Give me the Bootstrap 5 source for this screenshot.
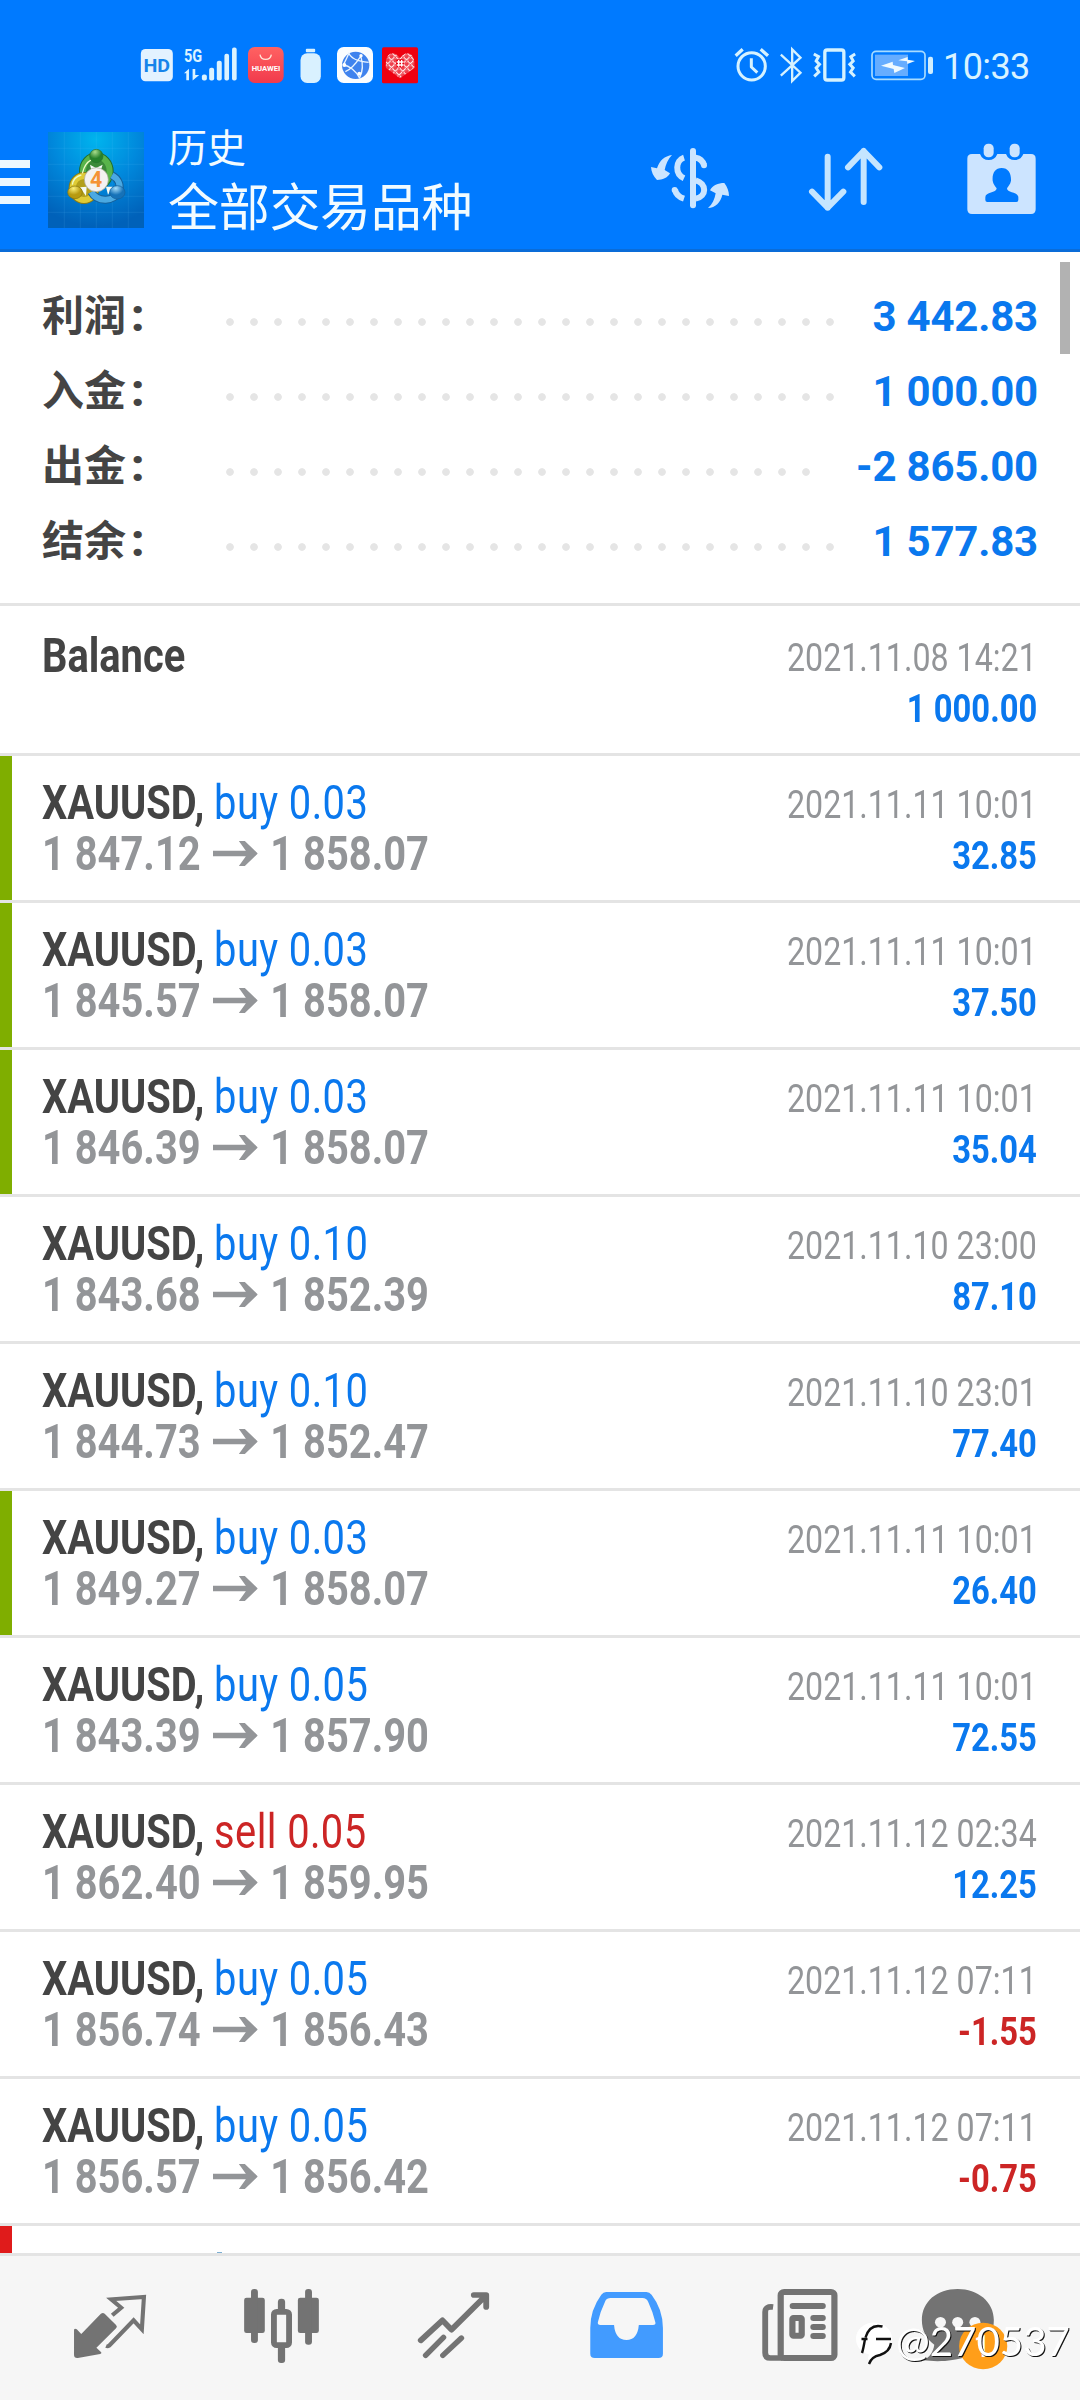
<!DOCTYPE html>
<html lang="zh-CN">
<head>
<meta charset="utf-8">
<meta name="viewport" content="width=device-width, initial-scale=1">
<title>历史 - 全部交易品种</title>
<link href="https://cdn.jsdelivr.net/npm/bootstrap@5.3.0/dist/css/bootstrap.min.css" rel="stylesheet">
<style>
  body { font-family: Roboto, "Noto Sans CJK SC", sans-serif; width: 1080px; height: 2400px; overflow: hidden; color: #444; }
  svg { display: block; flex: none; overflow: visible; }
  .app-head { background: #007aff; height: 252px; border-bottom: 3px solid #0a6cd8; }
  .status-strip { height: 108px; padding: 47px 0 0 140px; }
  .status-clock { font-size: 36px; line-height: 40px; letter-spacing: -.6px; color: #d8f3ff; margin-left: 10px; }
  .tool-strip { height: 141px; }
  .app-titles { color: #f2fbff; margin-left: 24px; line-height: 60px; width: 483px; padding-top: 1px; }
  .title-top { font-size: 39px; }
  .title-main { font-size: 51px; letter-spacing: -.3px; }
  .totals { height: 354px; padding: 26px 42px 0; border-bottom: 3px solid #e4e4e4; }
  .total-line { height: 75px; font-size: 42px; font-weight: 700; line-height: 75px; }
  .total-label { width: 182px; }
  .total-label span { margin-left: 5px; font-size: 45px; font-weight: 900; }
  .total-sum { letter-spacing: -.2px; padding-top: 1px; }
  .leader { height: 8px; margin-top: 13px; background: radial-gradient(circle at 6px 4px, #e5e5e5 3.4px, transparent 4.2px) 0 0 / 24px 8px repeat-x; }
  .l26 { width: 612px; } .l25 { width: 588px; }
  .up { color: #0a78ee; } .down { color: #cc2525; }
  .history { height: 1647px; overflow: hidden; }
  .history > .deal { flex: none; height: 147px; color: #444; border: 0; border-bottom: 3px solid #e4e4e4; padding: 21px 43px 0 42px; background: #fff; line-height: 51px; }
  .history > .first { height: 150px; padding-top: 24px; }
  .history > .tagged { box-shadow: inset 12px 0 #7fae00; }
  .history > .alert-tag { box-shadow: inset 12px 0 #e01b1b; }
  .sliver { width: 5px; height: 1px; margin: 5px 0 0 175px; background: #7eb0d4; }
  .deal-left { font-size: 48px; white-space: nowrap; }
  .symbol, .prices { transform-origin: left; width: max-content; transform: scaleX(.83); }
  .symbol span { letter-spacing: .5px; }
  .prices { color: #939598; font-weight: 700; }
  .prices svg { margin: 0 15px; }
  .deal-right { font-size: 39px; padding-top: 3px; white-space: nowrap; }
  .stamp, .profit { transform-origin: right; width: max-content; margin-left: auto; }
  .stamp { transform: scaleX(.825); color: #939598; }
  .profit { transform: scaleX(.84); font-weight: 700; }
  .thumb { width: 10px; height: 92px; background: #b2b2b2; right: 10px; top: 10px; }
  .tabs { height: 147px; background: #f6f6f6; border-top: 3px solid #e4e4e4; padding: 0 24px; }
  .tabs svg { width: 172px; height: 144px; }
  .tabs .signature { width: 216px; }
  .signature text { filter: drop-shadow(1.5px 1.5px 0 #111); }
</style>
</head>
<body class="m-0 bg-white">
<header class="app-head">
  <div class="status-strip d-flex align-items-start">
    <svg width="33" height="35" viewBox="60 52 98 105"><rect x="62" y="58" width="96" height="97" rx="14" fill="#e3f2ff"/><text x="110" y="127" font-size="56" font-weight="700" text-anchor="middle" fill="#1784ea" textLength="80" lengthAdjust="spacingAndGlyphs">HD</text></svg>
    <svg style="margin-left:11px" width="53" height="35" viewBox="192 52 160 105" fill="#dcf3ff"><text x="192" y="98" font-size="58" font-weight="700" textLength="55" lengthAdjust="spacingAndGlyphs">5G</text><path d="M192 131l15-14v35h-8v-21zM218 118h8v18h12l-20 17z"/><rect x="246" y="135" width="15" height="18" rx="6"/><rect x="268" y="114" width="15" height="39" rx="6"/><rect x="291" y="93" width="15" height="60" rx="6"/><rect x="314" y="72" width="14" height="81" rx="6"/><rect x="337" y="53" width="14" height="100" rx="6"/></svg>
    <svg style="margin-left:11px" width="36" height="36" viewBox="383 50 108 108"><defs><linearGradient id="hw" x2="0" y2="1"><stop stop-color="#ff6262"/><stop offset="1" stop-color="#f13a4c"/></linearGradient></defs><rect x="383" y="50" width="107" height="108" rx="20" fill="url(#hw)"/><path d="M419 73c3 19 31 19 34 0" fill="none" stroke="#ffe5d8" stroke-width="4"/><text x="437" y="121" font-size="19" font-weight="700" text-anchor="middle" textLength="86" lengthAdjust="spacingAndGlyphs" fill="#fff">HUAWEI</text></svg>
    <svg style="margin-left:16px" width="21" height="36" viewBox="540 50 62 108" fill="#d9f1ff"><rect x="557" y="55" width="28" height="11" rx="3"/><rect x="541" y="69" width="61" height="89" rx="20"/></svg>
    <svg style="margin-left:16px" width="36" height="36" viewBox="651 50 108 108"><rect x="651" y="50" width="108" height="108" rx="20" fill="#fafdff"/><circle cx="707" cy="105" r="41" fill="#3f83ee"/><g fill="none" stroke="#eaf5ff" stroke-width="4"><path d="M686 66c5 18 25 27 60 30M686 70c-5 12-10 22-16 34M670 104c17 2 38 16 49 40M722 76c6 20 8 45-3 66M676 124c16-6 30-22 46-46"/></g><g fill="#fff"><circle cx="673" cy="104" r="6"/><circle cx="723" cy="76" r="5"/><circle cx="718" cy="130" r="6"/></g></svg>
    <svg style="margin-left:9px" width="36" height="36" viewBox="786 50 108 108"><defs><pattern id="lace" width="16" height="16" patternUnits="userSpaceOnUse" patternTransform="rotate(45)"><rect width="16" height="16" fill="#ffe9e9"/><path d="M0 0h16M0 0v16M5 5h6v6H5z" stroke="#e80010" stroke-width="3" fill="none"/></pattern></defs><rect x="786" y="51" width="108" height="108" rx="5" fill="#ee0010"/><path d="M840 144l-42-31c-5-45 22-57 42-30c20-27 48-15 43 30z" fill="url(#lace)"/><rect x="828" y="87" width="24" height="24" rx="6" fill="#e80010"/><path d="M836 89v20M845 89v20M830 95h21M830 104h21" stroke="#fff" stroke-width="4"/></svg>
    <svg style="margin-left:317px" width="34" height="36" viewBox="44 52 102 108" fill="none" stroke="#d5f2ff"><circle cx="94" cy="110" r="41" stroke-width="9"/><path d="M93 86v26l18 17" stroke-width="9" stroke-linejoin="round"/><path d="M46 78l21-19M121 59l22 19" stroke-width="10"/></svg>
    <svg style="margin-left:11px" width="23" height="36" viewBox="178 52 68 108" fill="none" stroke="#d5f2ff" stroke-width="7"><path d="M180 75l59 54-25 25V59l25 25-59 54"/></svg>
    <svg style="margin-left:10px" width="43" height="36" viewBox="278 52 128 108" fill="none" stroke="#d5f2ff"><rect x="313" y="61" width="57" height="90" rx="7" stroke-width="10"/><path d="M280 73l14 8-7 13 10 10-10 11 8 12-14 13M404 73l-13 8 7 13-10 10 10 11-8 12 13 13" stroke-width="9"/></svg>
    <svg style="margin-left:15px" width="62" height="36" viewBox="450 52 186 108"><rect x="453" y="65" width="159" height="84" rx="12" fill="none" stroke="#a8dcff" stroke-width="5"/><rect x="462" y="75" width="99" height="64" fill="#66adff"/><rect x="621" y="81" width="15" height="52" rx="6" fill="#cfeeff"/><path d="M480 108l35-12 1 10 36 9-32 15-2-12zM532 92l28-10v8l22 4-23 9-1-8z" fill="#effaff"/></svg>
    <div class="status-clock">10:33</div>
  </div>
  <nav class="tool-strip d-flex align-items-center">
    <svg width="30" height="44" viewBox="0 0 30 44" style="margin-top:6px" fill="#edf8ff"><path d="M0 0h30v8H0zM0 18h30v8H0zM0 36h30v8H0z"/></svg>
    <svg style="margin:3px 0 0 18px" width="96" height="96" viewBox="144 66 288 288">
      <defs><radialGradient id="sky" cx=".5" cy=".08" r=".9"><stop stop-color="#00b4ee"/><stop offset=".5" stop-color="#0088dc"/><stop offset="1" stop-color="#0061b9"/></radialGradient>
      <radialGradient id="g1" cx=".4" cy=".2"><stop stop-color="#a8dc8c"/><stop offset="1" stop-color="#27812b"/></radialGradient>
      <radialGradient id="y1" cx=".4" cy=".2"><stop stop-color="#fbf07a"/><stop offset="1" stop-color="#b79a10"/></radialGradient>
      <radialGradient id="b1" cx=".4" cy=".2"><stop stop-color="#a5dcfa"/><stop offset="1" stop-color="#1672b8"/></radialGradient></defs>
      <rect x="144" y="66" width="288" height="288" fill="url(#sky)"/>
      <path d="M144 115h288M144 163h288M144 211h288M144 259h288M144 307h288M193 66v288M241 66v288M289 66v288M337 66v288M385 66v288" stroke="#6cd0ff" stroke-opacity=".18" stroke-width="2"/>
      <ellipse cx="289" cy="184" rx="40" ry="45" fill="#226e2b" stroke="#226e2b" stroke-width="24"/>
      <ellipse cx="289" cy="184" rx="40" ry="45" fill="#3b8a38" stroke="#59b44b" stroke-width="18"/>
      <ellipse cx="252" cy="234" rx="34" ry="36" fill="#8b7b12" stroke="#8b7b12" stroke-width="24"/>
      <ellipse cx="252" cy="234" rx="34" ry="36" fill="#b3a01c" stroke="#dfcb35" stroke-width="18"/>
      <path d="M274 246c18 32 70 30 82-2c8-20-2-38-20-48" fill="none" stroke="#165f98" stroke-width="24"/>
      <path d="M274 246c18 32 70 30 82-2c8-20-2-38-20-48" fill="none" stroke="#4aa9e2" stroke-width="18"/>
      <path d="M247 190c6-24 14-34 26-40M217 224c2-15 12-25 27-29" fill="none" stroke="#effbc8" stroke-width="4"/>
      <path d="M270 164l18 10 20-10-8 24h-24zM240 232l20-2-2 28zM318 230l20 0-14 24z" fill="#f5fbf5"/>
      <circle cx="289" cy="138" r="20" fill="url(#g1)" stroke="#27722d" stroke-width="2"/>
      <ellipse cx="225" cy="247" rx="22" ry="19" fill="url(#y1)" stroke="#84720f" stroke-width="2"/>
      <ellipse cx="352" cy="247" rx="23" ry="20" fill="url(#b1)" stroke="#165f98" stroke-width="2"/>
      <circle cx="289" cy="209" r="36" fill="#f4f2f1" stroke="#a5a395" stroke-width="2"/>
      <text x="288" y="232" text-anchor="middle" font-size="64" font-weight="700" fill="#f59335">4</text>
    </svg>
    <div class="app-titles"><div class="title-top">历史</div><div class="title-main">全部交易品种</div></div>
    <svg style="margin-bottom:1px" width="78" height="72" viewBox="93 66 234 216" fill="#cbe5ff"><path d="M93 141l18 4c8-24 23-37 45-40-12 12-19 29-22 45l16 10c-8 14-22 20-39 20-11-12-17-24-18-39zM327 228l-20-4c-5 23-21 39-43 40 13-11 20-26 23-44l-17-9c8-15 24-22 43-22 9 12 14 24 14 39z"/><path d="M192 113c-26 8-28 49 0 62M165 208c2 15 12 23 27 28M227 113c13 2 21 9 25 22M227 181c34 10 34 48 0 55" fill="none" stroke="#cbe5ff" stroke-width="18"/><circle cx="164" cy="210" r="9"/><circle cx="252" cy="136" r="9"/><rect x="210" y="84" width="18" height="181" rx="9"/></svg>
    <svg style="margin:0 0 1px 80px" width="74" height="72" viewBox="568 66 222 216" fill="none" stroke="#c5e5ff" stroke-width="18" stroke-linecap="round" stroke-linejoin="round"><path d="M624 110v153M577 215l47 48 47-48M732 246V93M685 142l47-49 47 49"/></svg>
    <svg style="margin:0 0 1px 84px" width="69" height="72" viewBox="1042 66 207 216"><path d="M1057 102h24q7 18 26 18t26-18h26q7 18 26 18t26-18h23q14 0 14 14v152q0 14-14 14h-177q-14 0-14-14V116q0-14 14-14z" fill="#cce4ff"/><rect x="1092" y="71" width="30" height="41" rx="14" fill="#cce4ff"/><rect x="1170" y="71" width="30" height="41" rx="14" fill="#cce4ff"/><path d="M1146 144c20 0 29 16 28 38-2 11-8 16-12 23 0 15 34 10 34 27v8q0 6-6 6h-87q-6 0-6-6v-8c0-17 34-12 34-27-5-7-10-12-12-23-2-22 7-38 27-38z" fill="#007aff"/></svg>
  </nav>
</header>

<main class="position-relative">
  <div class="thumb position-absolute"></div>
  <section class="totals">
    <div class="total-line d-flex align-items-center"><div class="total-label">利润<span>:</span></div><div class="leader l26"></div><div class="total-sum up ms-auto">3 442.83</div></div>
    <div class="total-line d-flex align-items-center"><div class="total-label">入金<span>:</span></div><div class="leader l26"></div><div class="total-sum up ms-auto">1 000.00</div></div>
    <div class="total-line d-flex align-items-center"><div class="total-label">出金<span>:</span></div><div class="leader l25"></div><div class="total-sum up ms-auto">-2 865.00</div></div>
    <div class="total-line d-flex align-items-center"><div class="total-label">结余<span>:</span></div><div class="leader l26"></div><div class="total-sum up ms-auto">1 577.83</div></div>
  </section>
  <svg width="0" height="0" class="position-absolute"><symbol id="arr" viewBox="0 0 45 25" preserveAspectRatio="none"><path d="M0 9.700h33L26 0h6l13 12.500L32 25h-6l7-9.700H0z"/></symbol></svg>
  <div class="history list-group list-group-flush">
    <div class="list-group-item deal first d-flex justify-content-between"><div class="deal-left"><div class="symbol"><b>Balance</b></div></div><div class="deal-right"><div class="stamp">2021.11.08 14:21</div><div class="profit up">1 000.00</div></div></div>
    <div class="list-group-item deal tagged d-flex justify-content-between"><div class="deal-left"><div class="symbol"><b>XAUUSD,</b> <span class="up">buy 0.03</span></div><div class="prices d-flex align-items-center">1 847.12<svg width="54" height="25" fill="currentColor"><use href="#arr"/></svg>1 858.07</div></div><div class="deal-right"><div class="stamp">2021.11.11 10:01</div><div class="profit up">32.85</div></div></div>
    <div class="list-group-item deal tagged d-flex justify-content-between"><div class="deal-left"><div class="symbol"><b>XAUUSD,</b> <span class="up">buy 0.03</span></div><div class="prices d-flex align-items-center">1 845.57<svg width="54" height="25" fill="currentColor"><use href="#arr"/></svg>1 858.07</div></div><div class="deal-right"><div class="stamp">2021.11.11 10:01</div><div class="profit up">37.50</div></div></div>
    <div class="list-group-item deal tagged d-flex justify-content-between"><div class="deal-left"><div class="symbol"><b>XAUUSD,</b> <span class="up">buy 0.03</span></div><div class="prices d-flex align-items-center">1 846.39<svg width="54" height="25" fill="currentColor"><use href="#arr"/></svg>1 858.07</div></div><div class="deal-right"><div class="stamp">2021.11.11 10:01</div><div class="profit up">35.04</div></div></div>
    <div class="list-group-item deal d-flex justify-content-between"><div class="deal-left"><div class="symbol"><b>XAUUSD,</b> <span class="up">buy 0.10</span></div><div class="prices d-flex align-items-center">1 843.68<svg width="54" height="25" fill="currentColor"><use href="#arr"/></svg>1 852.39</div></div><div class="deal-right"><div class="stamp">2021.11.10 23:00</div><div class="profit up">87.10</div></div></div>
    <div class="list-group-item deal d-flex justify-content-between"><div class="deal-left"><div class="symbol"><b>XAUUSD,</b> <span class="up">buy 0.10</span></div><div class="prices d-flex align-items-center">1 844.73<svg width="54" height="25" fill="currentColor"><use href="#arr"/></svg>1 852.47</div></div><div class="deal-right"><div class="stamp">2021.11.10 23:01</div><div class="profit up">77.40</div></div></div>
    <div class="list-group-item deal tagged d-flex justify-content-between"><div class="deal-left"><div class="symbol"><b>XAUUSD,</b> <span class="up">buy 0.03</span></div><div class="prices d-flex align-items-center">1 849.27<svg width="54" height="25" fill="currentColor"><use href="#arr"/></svg>1 858.07</div></div><div class="deal-right"><div class="stamp">2021.11.11 10:01</div><div class="profit up">26.40</div></div></div>
    <div class="list-group-item deal d-flex justify-content-between"><div class="deal-left"><div class="symbol"><b>XAUUSD,</b> <span class="up">buy 0.05</span></div><div class="prices d-flex align-items-center">1 843.39<svg width="54" height="25" fill="currentColor"><use href="#arr"/></svg>1 857.90</div></div><div class="deal-right"><div class="stamp">2021.11.11 10:01</div><div class="profit up">72.55</div></div></div>
    <div class="list-group-item deal d-flex justify-content-between"><div class="deal-left"><div class="symbol"><b>XAUUSD,</b> <span class="down">sell 0.05</span></div><div class="prices d-flex align-items-center">1 862.40<svg width="54" height="25" fill="currentColor"><use href="#arr"/></svg>1 859.95</div></div><div class="deal-right"><div class="stamp">2021.11.12 02:34</div><div class="profit up">12.25</div></div></div>
    <div class="list-group-item deal d-flex justify-content-between"><div class="deal-left"><div class="symbol"><b>XAUUSD,</b> <span class="up">buy 0.05</span></div><div class="prices d-flex align-items-center">1 856.74<svg width="54" height="25" fill="currentColor"><use href="#arr"/></svg>1 856.43</div></div><div class="deal-right"><div class="stamp">2021.11.12 07:11</div><div class="profit down">-1.55</div></div></div>
    <div class="list-group-item deal d-flex justify-content-between"><div class="deal-left"><div class="symbol"><b>XAUUSD,</b> <span class="up">buy 0.05</span></div><div class="prices d-flex align-items-center">1 856.57<svg width="54" height="25" fill="currentColor"><use href="#arr"/></svg>1 856.42</div></div><div class="deal-right"><div class="stamp">2021.11.12 07:11</div><div class="profit down">-0.75</div></div></div>
    <div class="list-group-item deal alert-tag"><div class="sliver"></div></div>
  </div>
</main>

<footer class="tabs d-flex position-relative">
  <svg viewBox="69.700 228 499.500 432" preserveAspectRatio="none" fill="#737373"><path d="M293 401q6-4 11 0l33 34q5 5 0 10l-57 58 14 14q2 4-3 5l-65 12q-11 1-11-9v-76q2-5 8-1l13 14z"/><path d="M326 406l26-23-29-25 95-7-6 97-24-27-71 76q-4 3-9 1" fill="none" stroke="#737373" stroke-width="12"/></svg>
  <svg viewBox="569.200 228 499.500 432" preserveAspectRatio="none" fill="#737373"><rect x="709" y="353" width="60" height="106" rx="7"/><rect x="729" y="327" width="20" height="162" rx="9"/><rect x="865" y="353" width="61" height="106" rx="7"/><rect x="886" y="327" width="20" height="167" rx="9"/><rect x="807" y="356" width="21" height="40" rx="10"/><rect x="807" y="495" width="21" height="54" rx="9"/><rect x="795.500" y="395.500" width="44" height="100" rx="8" fill="#f6f6f6" stroke="#737373" stroke-width="17"/></svg>
  <svg viewBox="1068.700 228 499.500 432" preserveAspectRatio="none" fill="none" stroke="#737373" stroke-width="16" stroke-linecap="round"><path d="M1222 481l63-60 26 28 98-100M1376 345h36v36" stroke-width="17" stroke-linejoin="round"/><path d="M1405 342h14v14z" fill="#737373" stroke="none"/><path d="M1236 526l52-54M1286 526l54-52"/></svg>
  <svg viewBox="0 228 499.500 432" preserveAspectRatio="none"><path fill-rule="evenodd" fill="#429bff" d="M192 336h117q9 0 15 8 33 44 33 100v77q0 13-13 13H159q-13 0-13-13v-77q0-55 32-100 6-8 14-8zM205 354q-11 0-15 8-15 32-22 65-1 8 7 8h40q4 45 36 45t36-45h41q9 0 7-8-8-34-21-62-5-11-16-11z"/></svg>
  <svg viewBox="499.500 228 499.500 432" preserveAspectRatio="none" fill="none" stroke="#737373"><rect x="699" y="336" width="156" height="198" rx="10" stroke-width="18"/><path d="M677 381q-23-3-23 15v122q0 16 15 16h35" stroke-width="17"/><path d="M734 378h87M794 414h27M794 441h27M794 468h27" stroke-width="18" stroke-linecap="round"/><rect x="733" y="414" width="27" height="53" rx="3" stroke-width="18"/></svg>
  <svg viewBox="999 228 499.500 432" preserveAspectRatio="none"><path d="M1213 327c58 0 105 38 105 93 0 62-43 112-121 120-26 5-60 4-83 1 18-10 28-25 31-47-24-18-36-43-36-74 0-55 44-93 104-93z" fill="#737373"/><g fill="#f6f6f6"><circle cx="1163" cy="427" r="16"/><circle cx="1213" cy="427" r="16"/><circle cx="1263" cy="427" r="16"/></g><circle cx="1287" cy="498" r="70" fill="#ff9e19"/><text x="1285" y="532" font-size="92" text-anchor="middle" fill="#fff">1</text></svg>
  <svg class="signature position-absolute end-0 top-0" viewBox="864 2256 216 144">
    <path d="M874 2322.500c10 0 18 7 18 16 0 8-4 13-10 16-5 3-8 4-12 8l-2-4 1-4c-8-2-13-8-13-16 0-9 8-16 18-16z" fill="#fff"/>
    <path d="M882.500 2326.500c-8-2-14 1-17 11M861.500 2339h6M876 2339h15M865 2339c-1 6-2 11-3 14M891 2343c-1 7-5 10-11 12-5 1-9 3-11 9" fill="none" stroke="#111" stroke-width="2.400"/>
    <text font-family="Lato" font-size="40" x="896" y="2355.500" fill="#fff" textLength="174" lengthAdjust="spacingAndGlyphs">@270537</text>
  </svg>
</footer>
<script src="https://cdn.jsdelivr.net/npm/bootstrap@5.3.0/dist/js/bootstrap.bundle.min.js"></script>
</body>
</html>
